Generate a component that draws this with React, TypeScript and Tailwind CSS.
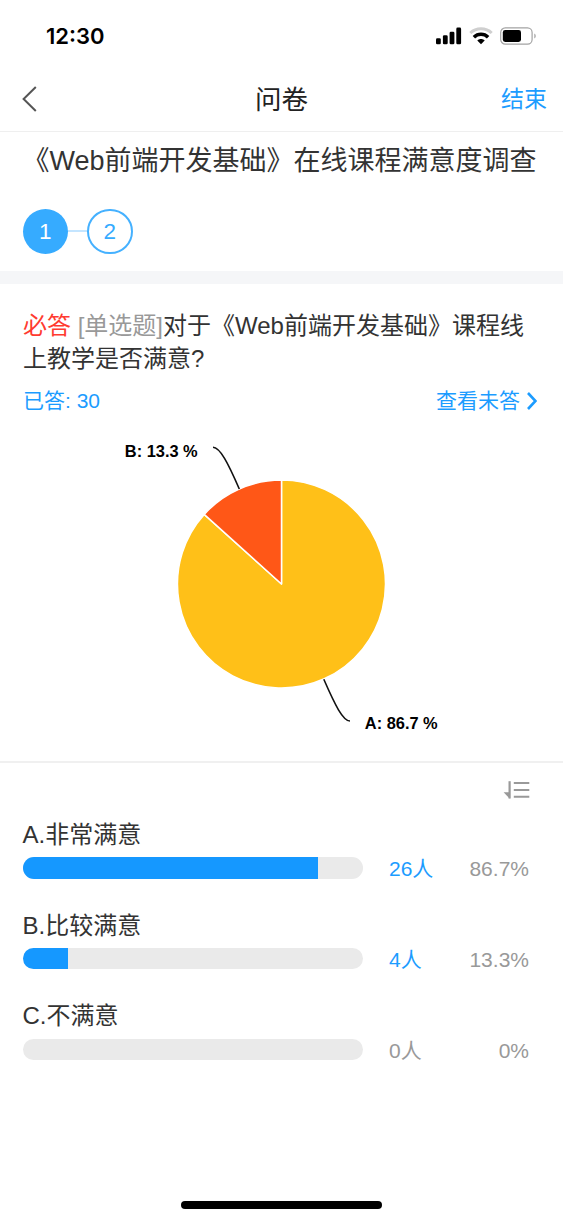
import { Fragment } from "react";

const options = [
  { key: "A", label: "非常满意", count: 26, percent: 86.7 },
  { key: "B", label: "比较满意", count: 4, percent: 13.3 },
  { key: "C", label: "不满意", count: 0, percent: 0 },
];

const steps = [1, 2];

function StatusBar() {
  return (
    <div className="flex h-[68px] items-center justify-between pt-1 pr-[26px] pl-[46px]">
      <span className="pt-px font-[Inter,sans-serif] text-[22px] font-semibold text-black">12:30</span>
      <div className="flex items-center">
        <svg width="26" height="18" viewBox="0 0 26 18" className="mr-[7px]">
          <rect x="0" y="11.3" width="4.8" height="6" rx="1.3" />
          <rect x="6.9" y="8.3" width="4.8" height="9" rx="1.3" />
          <rect x="13.6" y="4.7" width="4.8" height="12.6" rx="1.3" />
          <rect x="20.3" y="0.6" width="4.8" height="16.7" rx="1.3" />
        </svg>
        <svg width="24" height="18" viewBox="0 0 24 18" className="mr-[7px]" fill="none">
          <path d="M1.3 6C7.1 0.4 16.9 0.4 22.7 6" stroke="#cfcfcf" strokeWidth="3" />
          <path d="M4.9 10.2C8.9 6.3 15.1 6.3 19.1 10.2" stroke="#000" strokeWidth="3.5" />
          <path d="M12 17.2L8.3 13.6C10.2 11.6 13.8 11.6 15.7 13.6Z" fill="#000" />
        </svg>
        <svg width="37" height="18" viewBox="0 0 37 18">
          <rect x="0.7" y="0.9" width="31.4" height="16.2" rx="4.6" fill="none" stroke="#a3a3a3" strokeWidth="1.2" />
          <rect x="2.8" y="3" width="18.2" height="12" rx="2.4" />
          <path d="M34.3 6.5C36.2 7.3 36.2 10.7 34.3 11.5Z" fill="#a3a3a3" />
        </svg>
      </div>
    </div>
  );
}

function NavBar() {
  return (
    <header className="flex h-16 items-center justify-between border-b border-[#efefef] pr-4 pl-[22px]">
      <button className="flex w-10 pb-px" aria-label="返回">
        <svg width="15" height="26" viewBox="0 0 15 26" fill="none" stroke="#555" strokeWidth="2">
          <path d="M13.8 1L1.6 13L13.8 25" />
        </svg>
      </button>
      <h1 className="pt-0.5 text-[26.5px] text-[#222]">问卷</h1>
      <button className="text-[23px] text-[#1c9cff]">结束</button>
    </header>
  );
}

function PieChart() {
  return (
    <svg width="563" height="340" viewBox="0 421 563 340" className="block">
      <g stroke="#fff" strokeWidth="1.5" strokeLinejoin="round">
        <path d="M281.5 584V480A104 104 0 1 1 204.2 514.4Z" fill="#ffc018" />
        <path d="M281.5 584L204.2 514.4A104 104 0 0 1 281.5 480Z" fill="#ff5717" />
      </g>
      <g fill="none" stroke="#111" strokeWidth="1.6">
        <path d="M213 447.3C220 447.3 228 463 239.3 489" />
        <path d="M323.8 679.3C335 705 343 721 350 721" />
      </g>
      <g className="font-['Liberation_Sans',Arial,sans-serif] text-[16.4px] font-bold" fill="#000">
        <text x="124.8" y="457.3">B: 13.3 %</text>
        <text x="364.8" y="729.3">A: 86.7 %</text>
      </g>
    </svg>
  );
}

function SortIcon() {
  return (
    <svg width="27" height="20" viewBox="0 0 27 20" fill="none" stroke="#999" strokeWidth="1.9">
      <path d="M6.6 1.2V18.5" strokeWidth="2.2" />
      <path d="M10.8 3H26.3M10.8 10H26.3M10.8 16.7H26.3" />
      <path d="M0.6 12.2H6.8V18.7Z" fill="#999" stroke="none" />
    </svg>
  );
}

export default function App() {
  return (
    <div className="flex h-[1220px] w-[563px] flex-col overflow-hidden bg-white font-['Liberation_Sans','Noto_Sans_CJK_SC',sans-serif] text-[#333]">
      <StatusBar />
      <NavBar />

      <section className="h-[139px] pl-[22.5px]">
        <h2 className="h-[58px] text-[27px] leading-[58px] whitespace-nowrap">《Web前端开发基础》在线课程满意度调查</h2>
        <div className="mt-[18.5px] flex items-center">
          {steps.map((step, i) => (
            <Fragment key={step}>
              {i > 0 && <div className="h-0.5 w-[19px] bg-[#c4e5ff]" />}
              <div
                className={
                  i === 0
                    ? "flex size-[45.5px] items-center justify-center rounded-full bg-[#36abff] pt-0.5 text-[22.5px] text-white"
                    : "flex size-[45.5px] items-center justify-center rounded-full border-2 border-[#45b1ff] pt-0.5 text-[22.5px] text-[#36abff]"
                }
              >
                {step}
              </div>
            </Fragment>
          ))}
        </div>
      </section>

      <div className="h-[13px] bg-[#f5f6f8]" />

      <section className="h-[479px] border-b-2 border-[#f0f0f0]">
        <div className="h-[137px] px-[23px] pt-[25px]">
          <p className="h-[66px] text-2xl leading-[33px]">
            <span className="text-[#ff3b30]">必答</span> <span className="text-[#999]">[单选题]</span>
            对于《Web前端开发基础》课程线
            <br />
            上教学是否满意?
          </p>
          <div className="mt-[9px] flex h-[34px] items-center justify-between text-[21px] text-[#1c9cff]">
            <span>已答: 30</span>
            <button className="mr-[3px] flex items-center gap-[7px]">
              查看未答
              <svg width="10" height="18" viewBox="0 0 10 18" fill="none" stroke="currentColor" strokeWidth="2.6">
                <path d="M1 1L8.5 9L1 17" />
              </svg>
            </button>
          </div>
        </div>
        <PieChart />
      </section>

      <section className="pr-[33px] pl-[22.5px]">
        <div className="flex h-[53px] items-center justify-end">
          <SortIcon />
        </div>
        {options.map((o) => (
          <div key={o.key} className="h-[90.7px]">
            <div className="h-[37px] text-2xl leading-[38px]">
              {o.key}.{o.label}
            </div>
            <div className="flex h-[30px] items-center text-[21px] text-[#999]">
              <div className="h-[21.5px] w-[340.5px] overflow-hidden rounded-full bg-[#eaeaea]">
                <div className="h-full bg-[#1598ff]" style={{ width: `${o.percent}%` }} />
              </div>
              <span className={o.count > 0 ? "ml-[26px] pt-0.5 text-[#1c9cff]" : "ml-[26px] pt-0.5"}>{o.count}人</span>
              <span className="mr-px ml-auto pt-0.5">{o.percent}%</span>
            </div>
          </div>
        ))}
      </section>

      <div className="mt-auto mb-[11px] h-2 w-[201px] self-center rounded-full bg-black" />
    </div>
  );
}
